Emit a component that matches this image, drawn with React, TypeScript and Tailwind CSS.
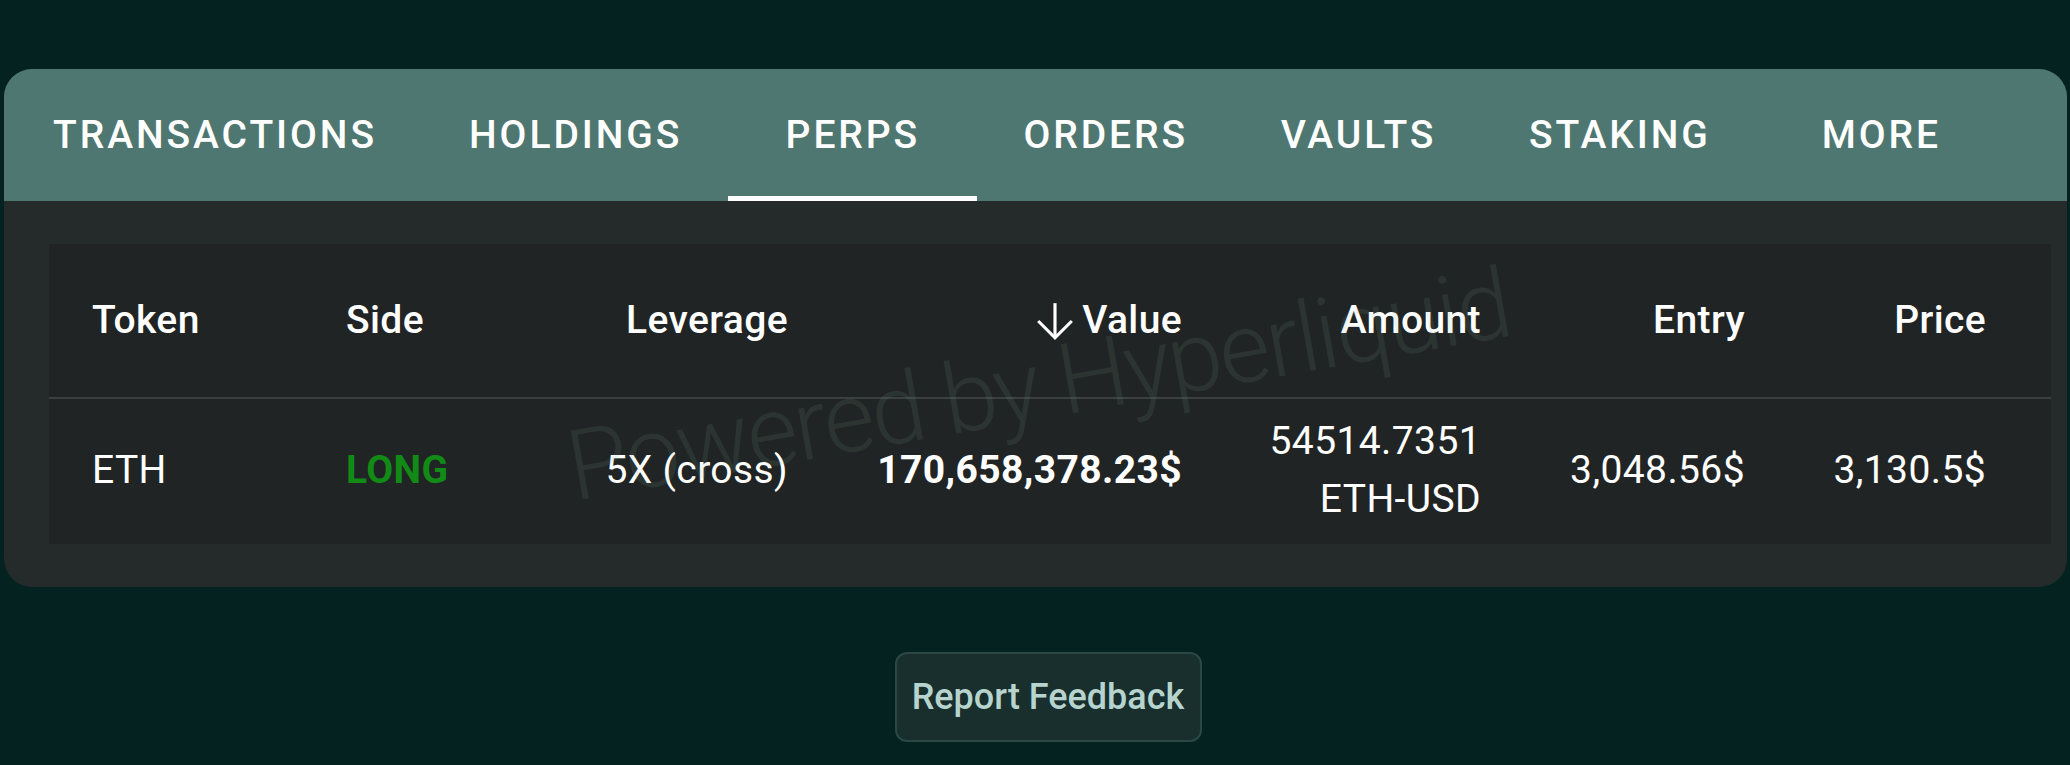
import React from "react";

const tabs = ["TRANSACTIONS", "HOLDINGS", "PERPS", "ORDERS", "VAULTS", "STAKING", "MORE"];

function ArrowDown() {
  return (
    <svg width="42" height="42" viewBox="0 0 40 40" fill="none" className="shrink-0">
      <path d="M20 3 V36" stroke="white" strokeWidth="3" />
      <path d="M4 20 L20 36 L36 20" stroke="white" strokeWidth="3" />
    </svg>
  );
}

const cols = "grid grid-cols-[254px_257px_271px_394px_299px_264px_241px]";

export default function App() {
  return (
    <div className="min-h-[765px] w-full bg-[#04221f] pt-[69px] font-['Roboto',sans-serif]">
      <div className="ml-[4px] mr-[3px] overflow-hidden rounded-[28px] bg-[#252a2a]">
        <div className="flex h-[132px] bg-[#4f7771] pl-[3px]">
          {tabs.map((t) => (
            <div
              key={t}
              className="relative flex h-full min-w-[249px] items-center justify-center px-[46px] text-[39px] font-medium uppercase tracking-[0.075em] text-white"
            >
              {t}
              {t === "PERPS" && <div className="absolute bottom-0 left-0 h-[5px] w-full bg-white" />}
            </div>
          ))}
        </div>
        <div className="pb-[43px] pl-[45px] pr-[16px] pt-[43px]">
          <div className="relative overflow-hidden bg-[#212424] text-white">
            <div className={`${cols} h-[155px] items-center border-b-2 border-[#3a3f3f] text-[39px] font-medium tracking-[0.01em]`}>
              <div className="px-[43px]">Token</div>
              <div className="px-[43px]">Side</div>
              <div className="px-[43px] text-right">Leverage</div>
              <div className="flex items-center justify-end gap-[6px] px-[43px]">
                <ArrowDown />
                <span>Value</span>
              </div>
              <div className="px-[43px] text-right">Amount</div>
              <div className="px-[43px] text-right">Entry</div>
              <div className="px-[43px] text-right">Price</div>
            </div>
            <div className={`${cols} h-[145px] items-center pb-[4px] text-[39px] leading-[58px] tracking-[0.01em]`}>
              <div className="px-[43px]">ETH</div>
              <div className="px-[43px] font-bold text-[#128a16]">LONG</div>
              <div className="px-[43px] text-right">5X (cross)</div>
              <div className="px-[43px] text-right font-bold">170,658,378.23$</div>
              <div className="px-[43px] text-right">
                <div>54514.7351</div>
                <div>ETH-USD</div>
              </div>
              <div className="px-[43px] text-right">3,048.56$</div>
              <div className="px-[43px] text-right">3,130.5$</div>
            </div>
            <div className="pointer-events-none absolute left-[989px] top-[141px] -translate-x-1/2 -translate-y-1/2 -rotate-[10deg] whitespace-nowrap text-[98px] font-light tracking-[-0.025em] text-[#78aaa0]/[0.12]">
              Powered by Hyperliquid
            </div>
          </div>
        </div>
      </div>
      <div className="mt-[65px] flex justify-center pl-[26px]">
        <button className="flex h-[90px] w-[307px] items-center justify-center rounded-[12px] border-2 border-[#2b4844] bg-[#182f2d] text-[36px] font-medium text-[#b6d4cd]">
          Report Feedback
        </button>
      </div>
    </div>
  );
}
